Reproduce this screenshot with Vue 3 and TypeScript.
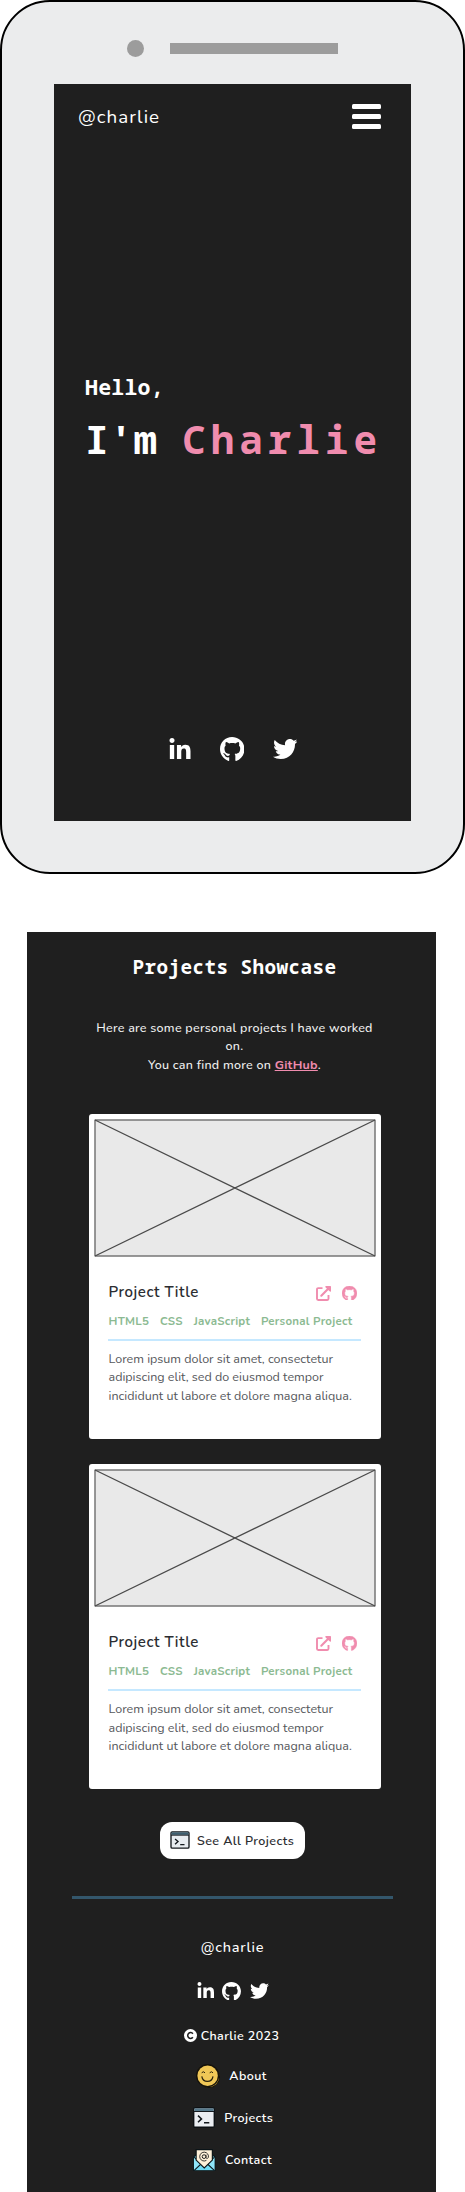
<script setup lang="ts">
interface Project {
  id: number
  title: string
  tags: string[]
  lines: string[]
}

const lorem = [
  'Lorem ipsum dolor sit amet, consectetur',
  'adipiscing elit, sed do eiusmod tempor',
  'incididunt ut labore et dolore magna aliqua.',
]
const tags = ['HTML5', 'CSS', 'JavaScript', 'Personal Project']
const projects: Project[] = [
  { id: 1, title: 'Project Title', tags, lines: lorem },
  { id: 2, title: 'Project Title', tags, lines: lorem },
]

const github =
  'M244.8 8C106.1 8 0 113.3 0 252c0 110.9 69.8 205.8 169.5 239.2 12.8 2.3 17.3-5.6 17.3-12.1 0-6.2-.3-40.4-.3-61.4 0 0-70 15-84.7-29.8 0 0-11.4-29.1-27.8-36.6 0 0-22.9-15.7 1.6-15.4 0 0 24.9 2 38.6 25.8 21.9 38.6 58.6 27.5 72.9 20.9 2.3-16 8.8-27.1 16-33.7-55.9-6.2-112.3-14.3-112.3-110.5 0-27.5 7.6-41.3 23.6-58.9-2.6-6.5-11.1-33.3 2.6-67.9 20.9-6.5 69 27 69 27 20-5.6 41.5-8.5 62.8-8.5s42.8 2.9 62.8 8.5c0 0 48.1-33.6 69-27 13.7 34.7 5.2 61.4 2.6 67.9 16 17.7 25.8 31.5 25.8 58.9 0 96.5-58.9 104.2-114.8 110.5 9.2 7.9 17 22.9 17 46.4 0 33.7-.3 75.4-.3 83.6 0 6.5 4.6 14.4 17.3 12.1C428.2 457.8 496 362.9 496 252 496 113.3 383.5 8 244.8 8z'
const socials = [
  {
    name: 'linkedin',
    box: '0 0 448 448',
    d: 'M100.28 448H7.4V148.9h92.88zM53.79 108.1C24.09 108.1 0 83.5 0 53.8a53.79 53.79 0 0 1 107.58 0c0 29.7-24.1 54.3-53.79 54.3zM447.9 448h-92.68V302.4c0-34.7-.7-79.2-48.29-79.2-48.29 0-55.69 37.7-55.69 76.7V448h-92.78V148.9h89.08v40.8h1.3c12.4-23.5 42.69-48.3 87.88-48.3 94 0 111.28 61.9 111.28 142.3V448z',
  },
  { name: 'github', box: '0 8 496 484', d: github },
  {
    name: 'twitter',
    box: '0 48 512 416',
    d: 'M459.37 151.716c.325 4.548.325 9.097.325 13.645 0 138.72-105.583 298.558-298.558 298.558-59.452 0-114.68-17.219-161.137-47.106 8.447.974 16.568 1.299 25.34 1.299 49.055 0 94.213-16.568 130.274-44.832-46.132-.975-84.792-31.188-98.112-72.772 6.498.974 12.995 1.624 19.818 1.624 9.421 0 18.843-1.3 27.614-3.573-48.081-9.747-84.143-51.98-84.143-102.985v-1.299c13.969 7.797 30.214 12.67 47.431 13.319-28.264-18.843-46.781-51.005-46.781-87.391 0-19.492 5.197-37.36 14.294-52.954 51.655 63.675 129.3 105.258 216.365 109.807-1.624-7.797-2.599-15.918-2.599-24.04 0-57.828 46.782-104.934 104.934-104.934 30.213 0 57.502 12.67 76.67 33.137 23.715-4.548 46.456-13.32 66.599-25.34-7.798 24.366-24.366 44.833-46.132 57.827 21.117-2.273 41.584-8.122 60.426-16.243-14.292 20.791-32.161 39.308-52.628 54.253z',
  },
]
</script>

<template>
  <div class="page">
    <section class="phone">
      <div class="speaker">
        <span class="camera"></span>
        <span class="slot"></span>
      </div>
      <div class="screen">
        <header class="bar">
          <span class="handle">@charlie</span>
          <button class="menu" aria-label="Menu"><i></i><i></i><i></i></button>
        </header>
        <div class="hero">
          <p class="hello">Hello,</p>
          <h1 class="name">I'm <span class="accent">Charlie</span></h1>
        </div>
        <nav class="social">
          <svg v-for="s in socials" :key="s.name" :class="s.name" :viewBox="s.box"><path :d="s.d" /></svg>
        </nav>
      </div>
    </section>

    <main class="panel">
      <section class="showcase">
        <h2>Projects Showcase</h2>
        <p class="intro">
          Here are some personal projects I have worked<br />on.<br />You can find more on
          <a>GitHub</a>.
        </p>
        <article v-for="p in projects" :key="p.id" class="card">
          <svg class="thumb" viewBox="0 0 282 138">
            <rect x="1" y="1" width="280" height="136" rx="0.5" />
            <path d="M1 1 281 137M281 1 1 137" />
          </svg>
          <div class="body">
            <div class="head">
              <h3>{{ p.title }}</h3>
              <span class="links">
                <svg class="ext" viewBox="0 0 15 15">
                  <path d="M6.5 2.1H2.2Q1 2.1 1 3.3V12.8Q1 14 2.2 14H11.3Q12.5 14 12.5 12.8V9" fill="none" stroke="currentColor" stroke-width="1.9" />
                  <path d="M5.3 9.7 12.2 2.8" fill="none" stroke="currentColor" stroke-width="2.1" stroke-linecap="round" />
                  <path d="M9.3 0H14.4Q15 0 15 .6V5.7L13.5 5.2 9.7 1.4Z" fill="currentColor" />
                </svg>
                <svg class="git" viewBox="0 8 496 484"><path :d="github" fill="currentColor" /></svg>
              </span>
            </div>
            <ul class="tags">
              <li v-for="t in p.tags" :key="t">{{ t }}</li>
            </ul>
            <div class="rule"></div>
            <p class="text">
              <template v-for="l in p.lines" :key="l">{{ l }}<br /></template>
            </p>
          </div>
        </article>
      </section>

      <a class="all">
        <svg class="term" viewBox="0 0 22 20">
          <rect x="1" y="1" width="20" height="18" rx="1.3" fill="#e8ecf0" stroke="#14191d" stroke-width="1.5" />
          <path d="M1.5 1.5H20.5V4.3H1.5Z" fill="#3e5f70" />
          <path d="M1 4.7H21" stroke="#14191d" stroke-width="1" />
          <path d="M5.5 8.8 8.8 11.7 5.5 14.6M11.2 15.2H16" fill="none" stroke="#14191d" stroke-width="1.5" />
        </svg>
        See All Projects
      </a>
      <div class="divider"></div>

      <footer class="foot">
        <p class="foot-handle">@charlie</p>
        <nav class="foot-social">
          <svg v-for="s in socials" :key="s.name" :class="s.name" :viewBox="s.box"><path :d="s.d" /></svg>
        </nav>
        <p class="copy">
          <svg viewBox="0 0 13 13">
            <circle cx="6.5" cy="6.5" r="6.5" fill="#fff" />
            <path d="M8.9 4.7A2.9 2.9 0 1 0 8.9 8.3" fill="none" stroke="#1f1f1f" stroke-width="1.5" />
          </svg>
          Charlie 2023
        </p>
        <ul class="links-list">
          <li class="about">
            <svg viewBox="0 0 24 24">
              <circle cx="13" cy="13" r="10.6" fill="#cfa63b" stroke="#15120a" stroke-width="1" />
              <circle cx="11.6" cy="11.6" r="11.6" fill="#15120a" />
              <circle cx="11.6" cy="11.7" r="10.2" fill="#f0c756" />
              <path d="M5.7 8.8Q7.3 6.7 9 8.8M13.7 8.8Q15.4 6.7 17 8.8" fill="none" stroke="#2a220d" stroke-width="1" />
              <path d="M5.8 12.3Q6.6 17.3 11.4 17.3T17 12.3" fill="none" stroke="#2a220d" stroke-width="1.2" />
            </svg>
            About
          </li>
          <li class="projects">
            <svg viewBox="0 0 22 21">
              <rect x=".7" y=".7" width="20.6" height="19.6" rx="1.3" fill="#ebeef2" stroke="#0d1114" stroke-width="1.4" />
              <path d="M1.4 1.4H20.6V4H1.4Z" fill="#55788a" />
              <path d="M1 4.5H21" stroke="#14191d" stroke-width="1" />
              <path d="M5 8.6 8.5 11.9 5 15.2M11 15.7H16.3" fill="none" stroke="#14191d" stroke-width="1.5" />
            </svg>
            Projects
          </li>
          <li class="contact">
            <svg viewBox="0 0 23 23">
              <path d="M.7 8 4 5.5H19L22.3 8V22.3H.7Z" fill="#6fdcf5" stroke="#0b1418" stroke-width="1.2" />
              <path d="M1 8.3 8.5 15 1 22M22 8.3 14.5 15 22 22" fill="#8fe6fa" stroke="#0b1418" stroke-width="1.1" />
              <path d="M3.2.7H19.8V11.3L11.5 19.3 3.2 11.3Z" fill="#fdf0d8" stroke="#0b1418" stroke-width="1.2" />
              <circle cx="11.3" cy="7.8" r="1.9" fill="none" stroke="#1c1c1c" stroke-width="1" />
              <path d="M13.3 5.8V8.6Q13.5 9.9 14.8 9.6 16 9 15.8 7A4.5 4.5 0 1 0 13.7 11.6" fill="none" stroke="#1c1c1c" stroke-width=".9" />
            </svg>
            Contact
          </li>
        </ul>
      </footer>
    </main>
  </div>
</template>

<style>
body {
  margin: 0;
  background: #fff;
}
</style>

<style scoped>
.page {
  width: 465px;
  height: 2192px;
  overflow: hidden;
  font-family: Nunito, Lato, sans-serif;
  color: #fff;
}
.page * {
  box-sizing: border-box;
}
h1,
h2,
h3,
p,
ul {
  margin: 0;
  padding: 0;
  font-weight: inherit;
  list-style: none;
}
svg {
  display: block;
  flex: none;
}
.phone {
  height: 874px;
  border: 2px solid #000;
  border-radius: 50px;
  background: #ebeced;
}
.speaker {
  display: flex;
  align-items: center;
  gap: 26px;
  height: 82px;
  padding: 11px 0 0 125px;
}
.camera {
  width: 17px;
  height: 17px;
  border-radius: 50%;
  background: #9c9c9c;
}
.slot {
  width: 168px;
  height: 11px;
  background: #9c9c9c;
}
.screen {
  width: 357px;
  height: 737px;
  margin-left: 52px;
  background: #1f1f1f;
}
.bar {
  display: flex;
  align-items: center;
  justify-content: space-between;
  height: 66px;
  padding: 0 30px 0 24px;
}
.handle {
  font-size: 18.8px;
  letter-spacing: 1.05px;
}
.menu {
  display: flex;
  flex-direction: column;
  gap: 5px;
  width: 29px;
  margin-top: -2px;
  padding: 0;
  border: 0;
  background: none;
}
.menu i {
  height: 5px;
  border-radius: 1.5px;
  background: #fff;
}
.hero {
  height: 585px;
  padding: 220px 0 0 31px;
  font-family: 'Noto Sans Mono', 'DejaVu Sans Mono', monospace;
  font-weight: 700;
  white-space: nowrap;
}
.hello {
  font-size: 21.5px;
  line-height: 34px;
  letter-spacing: 0.25px;
}
.name {
  margin-top: 5px;
  font-size: 39.3px;
  line-height: 60px;
  letter-spacing: 0.7px;
}
.accent {
  color: #f08cae;
  letter-spacing: 5px;
}
.social {
  display: flex;
  align-items: center;
  height: 28px;
  padding-left: 115px;
  fill: #fff;
}
.social .linkedin {
  width: 22px;
  height: 21px;
  margin-top: -2px;
}
.social .github {
  width: 24.5px;
  height: 24px;
  margin-left: 28.5px;
}
.social .twitter {
  width: 24.5px;
  height: 20px;
  margin-left: 28.5px;
}

.panel {
  width: 409px;
  height: 1260px;
  margin: 58px 0 0 27px;
  background: #1f1f1f;
}
.showcase {
  display: flex;
  flex-direction: column;
  align-items: center;
  padding: 20px 0 0 6px;
}
h2 {
  font: 700 19.3px/30px 'Noto Sans Mono', 'DejaVu Sans Mono', monospace;
  letter-spacing: 0.42px;
}
.intro {
  margin: 36.5px 0 39.5px;
  font-size: 12.5px;
  font-weight: 500;
  line-height: 18.67px;
  letter-spacing: 0.26px;
  text-align: center;
  color: #f1f1f1;
  white-space: nowrap;
}
.intro a {
  color: #f08cae;
  font-weight: 700;
  text-decoration: underline;
}
.card {
  width: 292px;
  height: 324.6px;
  margin-bottom: 25.6px;
  padding: 5px;
  border-radius: 3px;
  background: #fff;
  color: #2b2d31;
}
.card:last-child {
  margin-bottom: 0;
}
.thumb {
  width: 282px;
  height: 138px;
}
.thumb rect {
  fill: #e9e9e9;
  stroke: #777;
  stroke-width: 1.5;
}
.thumb path {
  stroke: #4a4a4a;
  stroke-width: 1.3;
}
.body {
  padding: 22.8px 9px 0 15px;
}
.head {
  display: flex;
  justify-content: space-between;
  height: 24px;
}
h3 {
  font-size: 15px;
  font-weight: 600;
  line-height: 24px;
  letter-spacing: 0.55px;
}
.links {
  display: flex;
  gap: 11.5px;
  padding: 6px 9.5px 0 0;
  color: #f08cae;
}
.ext {
  width: 15px;
  height: 15px;
}
.git {
  width: 15px;
  height: 14.6px;
}
.git path {
  stroke: currentColor;
  stroke-width: 14;
}
.tags {
  display: flex;
  gap: 10.8px;
  margin-top: 8.4px;
  color: #8cba92;
  font-size: 11.5px;
  font-weight: 700;
  line-height: 18px;
  letter-spacing: 0.25px;
  white-space: nowrap;
}
.rule {
  width: 253px;
  height: 2px;
  margin: 8.8px 0 8.8px -0.5px;
  background: #c5e8ff;
}
.text {
  color: #55575b;
  font-size: 12.5px;
  line-height: 18.67px;
  white-space: nowrap;
}
.all {
  display: flex;
  align-items: center;
  gap: 7px;
  width: 144.5px;
  height: 37px;
  margin: 33.2px 0 0 133px;
  padding-left: 10px;
  border-radius: 12px;
  background: #fff;
  color: #2b2d31;
  font-size: 12.5px;
  font-weight: 600;
  letter-spacing: 0.42px;
  white-space: nowrap;
}
.term {
  width: 20px;
  height: 18px;
}
.divider {
  width: 321px;
  height: 2.5px;
  margin: 37.5px 0 0 45px;
  background: #33566b;
}
.foot {
  display: flex;
  flex-direction: column;
  align-items: center;
  padding-top: 38.2px;
  font-size: 12.5px;
  font-weight: 600;
  letter-spacing: 0.4px;
}
.foot-handle {
  padding-left: 2px;
  font-size: 14.5px;
  font-weight: 500;
  line-height: 20px;
  letter-spacing: 0.8px;
}
.foot-social {
  display: flex;
  align-items: center;
  height: 18px;
  margin: 24.8px 0 26.2px 2px;
  fill: #fff;
}
.foot-social .linkedin {
  width: 17.5px;
  height: 16.5px;
  margin-top: -1.5px;
}
.foot-social .github {
  width: 19px;
  height: 18.5px;
  margin-left: 8px;
}
.foot-social .twitter {
  width: 19px;
  height: 16px;
  margin-left: 8.5px;
}
.copy {
  display: flex;
  align-items: center;
  gap: 4px;
  height: 18px;
}
.copy svg {
  width: 13px;
  height: 13px;
}
.links-list {
  margin-top: 10.8px;
}
.links-list li {
  display: flex;
  align-items: center;
  justify-content: center;
  height: 42px;
}
.about {
  gap: 9px;
}
.projects {
  gap: 9.5px;
  padding-left: 3px;
}
.contact {
  gap: 9.5px;
  padding-left: 2px;
}
.about svg {
  width: 24px;
  height: 24px;
}
.projects svg {
  width: 22px;
  height: 21px;
}
.contact svg {
  width: 22.5px;
  height: 22.5px;
}
</style>
